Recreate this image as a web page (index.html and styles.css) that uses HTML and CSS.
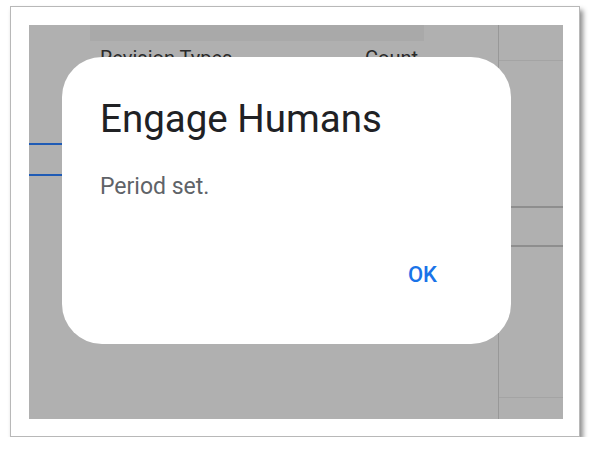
FILE: index.html
```html
<!DOCTYPE html>
<html lang="en">
<head>
<meta charset="utf-8">
<title>Engage Humans</title>
<link rel="stylesheet" href="styles.css">
</head>
<body>
<div class="frame">
  <div class="screen">
    <div class="main">
      <div class="topstrip"></div>
      <div class="colhead">
        <span>Revision Types</span>
        <span>Count</span>
      </div>
      <div class="tabline first"></div>
      <div class="tabline second"></div>
    </div>
    <div class="side">
      <div class="row r1"></div>
      <div class="row r2"></div>
      <div class="row r3"></div>
      <div class="row r4"></div>
    </div>
    <div class="dialog" role="dialog">
      <h1 class="title">Engage Humans</h1>
      <p class="message">Period set.</p>
      <div class="actions"><button class="ok">OK</button></div>
    </div>
  </div>
</div>
</body>
</html>
```
FILE: styles.css
```css
* { box-sizing: border-box; }
html, body { margin: 0; padding: 0; background: #ffffff; }
body { font-family: Roboto, "Liberation Sans", sans-serif; }

.frame {
  margin: 6px 0 0 10px;
  width: 570px;
  height: 431px;
  padding: 18px 17px 17px 18px;
  background: #ffffff;
  border: 1px solid #b8b8b8;
  box-shadow: 3px 4px 5px rgba(0,0,0,0.45);
}

.screen {
  position: relative;
  width: 534px;
  height: 394px;
  background: #b0b0b0;
  display: flex;
}

.main {
  width: 470px;
  border-right: 1px solid #989898;
}

.topstrip {
  margin-left: 61px;
  width: 334px;
  height: 16px;
  background: #a9a9a9;
}

.colhead {
  margin-top: 5px;
  padding-left: 71px;
  display: grid;
  grid-template-columns: 265px auto;
  font-size: 20px;
  line-height: 24px;
  color: #2a2a2a;
}

.tabline {
  width: 33px;
  height: 2px;
  background: #1f5bb5;
}
.tabline.first { margin-top: 73px; }
.tabline.second { margin-top: 29px; }

.side { flex: 1; }
.row { border-bottom: 1px solid #a4a4a4; }
.r1 { height: 36px; }
.r2 { height: 147px; border-bottom: 2px solid #8e8e8e; }
.r3 { height: 39px; border-bottom: 2px solid #8e8e8e; }
.r4 { height: 151px; }

.dialog {
  position: absolute;
  left: 33px;
  top: 32px;
  width: 449px;
  height: 287px;
  background: #ffffff;
  border-radius: 40px;
  padding: 40px 74px 0 38px;
}

.title {
  margin: 0;
  font-size: 38.5px;
  line-height: 44px;
  font-weight: 400;
  color: #202124;
}

.message {
  margin: 32px 0 0;
  font-size: 23px;
  line-height: 28px;
  color: #5f6368;
}

.actions {
  margin-top: 62px;
  display: flex;
  justify-content: flex-end;
}

.ok {
  border: 0;
  padding: 0;
  background: none;
  font-family: inherit;
  font-size: 22px;
  line-height: 24px;
  font-weight: 500;
  color: #1a73e8;
}
```
